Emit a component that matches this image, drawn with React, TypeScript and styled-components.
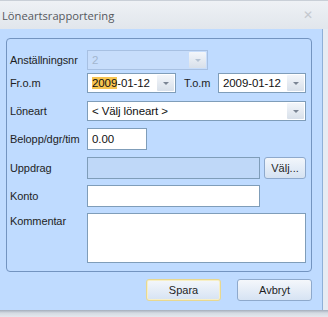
import React from 'react'
import styled, { createGlobalStyle } from 'styled-components'

const GlobalStyle = createGlobalStyle`
  html, body {
    margin: 0;
    padding: 0;
    width: 328px;
    height: 317px;
    overflow: hidden;
    background: #d9dee6;
  }
  * {
    box-sizing: border-box;
  }
`

const Window = styled.div`
  width: 328px;
  height: 317px;
  display: flex;
  flex-direction: column;
  font-family: 'Liberation Sans', Arial, sans-serif;
  font-size: 11px;
  letter-spacing: -0.1px;
  color: #1e1e1e;
  background: linear-gradient(to right, #bfdbff 0, #bfdbff 322px, #8fb0d8 322px, #8fb0d8 323px, #e6ebf2 323px);
`

const TitleBar = styled.div`
  height: 29px;
  display: flex;
  align-items: center;
  justify-content: space-between;
  padding: 0 15px 0 2px;
  background: linear-gradient(#eef1f5, #e1e6ec);
  border-top: 1px solid #c9cfd7;
`

const Title = styled.span`
  font-family: 'Open Sans', 'Liberation Sans', sans-serif;
  font-size: 11.2px;
  letter-spacing: 0;
  color: #55585e;
`

const Close = styled.span`
  font-family: 'DejaVu Sans', sans-serif;
  font-size: 12px;
  color: #c4c8ce;
`

const Body = styled.div`
  width: 322px;
  flex: 1;
  display: flex;
  flex-direction: column;
  padding: 9px 10px 0 6px;
`

const GroupBox = styled.div`
  height: 234px;
  border: 1px solid #7394c0;
  border-radius: 4px;
  padding: 11px 0 0 3px;
  display: flex;
  flex-direction: column;
`

const Row = styled.div<{ $top: number; $align?: string }>`
  display: flex;
  align-items: ${(p) => p.$align || 'center'};
  margin-top: ${(p) => p.$top}px;
`

const Label = styled.label<{ $pad?: number }>`
  width: 77px;
  flex: none;
  white-space: nowrap;
  padding-top: ${(p) => p.$pad || 0}px;
`

const Field = styled.div<{ $w: number; $h?: number; $disabled?: boolean }>`
  width: ${(p) => p.$w}px;
  height: ${(p) => p.$h || 22}px;
  flex: none;
  display: flex;
  align-items: center;
  padding-left: 4px;
  border: 1px solid ${(p) => (p.$disabled ? '#a7c0e2' : '#7f9db9')};
  background: ${(p) => (p.$disabled ? '#c7ddfb' : '#fff')};
  color: ${(p) => (p.$disabled ? '#a3b6cf' : '#111')};
  font-size: 11.5px;
`

const DropButton = styled.span`
  margin-left: auto;
  width: 17px;
  height: calc(100% - 2px);
  margin-right: 1px;
  display: flex;
  align-items: center;
  justify-content: center;
  background: linear-gradient(#f3f6fa, #d8e0ea);
  border-radius: 1px;
`

const Arrow = styled.span<{ $dim?: boolean }>`
  width: 0;
  height: 0;
  border-left: 3px solid transparent;
  border-right: 3px solid transparent;
  border-top: 3px solid ${(p) => (p.$dim ? '#b5c3d4' : '#7b8594')};
`

const Highlight = styled.span`
  background: #f6c450;
`

const InlineLabel = styled.span`
  margin: 0 7px 0 8px;
  width: 27px;
  white-space: nowrap;
`

const SmallButton = styled.button`
  margin-left: 4px;
  width: 42px;
  height: 22px;
  padding: 0;
  border: 1px solid #8ea9cc;
  border-radius: 3px;
  background: linear-gradient(#f2f6fb, #d5e2f2);
  font: inherit;
  color: #1e1e1e;
`

const Footer = styled.div`
  display: flex;
  justify-content: flex-end;
  gap: 16px;
  margin-top: 7px;
`

const Button = styled.button<{ $focus?: boolean }>`
  width: 75px;
  height: 22px;
  padding: 0;
  border: 1px solid ${(p) => (p.$focus ? '#e8d890' : '#8ea9cc')};
  border-radius: 3px;
  background: linear-gradient(#f4f7fb, #d6e3f3);
  box-shadow: ${(p) => (p.$focus ? 'inset 0 0 0 1px #f7efc6' : 'none')};
  font: inherit;
  color: #1e1e1e;
`

const BottomEdge = styled.div`
  height: 7px;
  background: linear-gradient(#a3adbb, #d4dae2 3px, #e4e8ee);
`

const Combo = ({ w, children, disabled }: { w: number; children: React.ReactNode; disabled?: boolean }) => (
  <Field $w={w} $h={20} $disabled={disabled} style={{ paddingRight: 0 }}>
    <span>{children}</span>
    <DropButton>
      <Arrow $dim={disabled} />
    </DropButton>
  </Field>
)

export default function App() {
  return (
    <>
      <GlobalStyle />
      <Window>
        <TitleBar>
          <Title>Löneartsrapportering</Title>
          <Close>✕</Close>
        </TitleBar>
        <Body>
          <GroupBox>
            <Row $top={0}>
              <Label>Anställningsnr</Label>
              <Combo w={121} disabled>
                2
              </Combo>
            </Row>
            <Row $top={3}>
              <Label>Fr.o.m</Label>
              <Combo w={89}>
                <Highlight>2009</Highlight>-01-12
              </Combo>
              <InlineLabel>T.o.m</InlineLabel>
              <Combo w={88}>2009-01-12</Combo>
            </Row>
            <Row $top={8}>
              <Label>Löneart</Label>
              <Combo w={219}>&lt; Välj löneart &gt;</Combo>
            </Row>
            <Row $top={7}>
              <Label>Belopp/dgr/tim</Label>
              <Field $w={60}>0.00</Field>
            </Row>
            <Row $top={7}>
              <Label>Uppdrag</Label>
              <Field $w={173} $disabled style={{ borderColor: '#7f9db9', background: '#bfd8f8' }} />
              <SmallButton>Välj...</SmallButton>
            </Row>
            <Row $top={6}>
              <Label>Konto</Label>
              <Field $w={173} />
            </Row>
            <Row $top={6} $align="flex-start">
              <Label $pad={2}>Kommentar</Label>
              <Field $w={219} $h={50} />
            </Row>
          </GroupBox>
          <Footer>
            <Button $focus>Spara</Button>
            <Button>Avbryt</Button>
          </Footer>
        </Body>
        <BottomEdge />
      </Window>
    </>
  )
}
